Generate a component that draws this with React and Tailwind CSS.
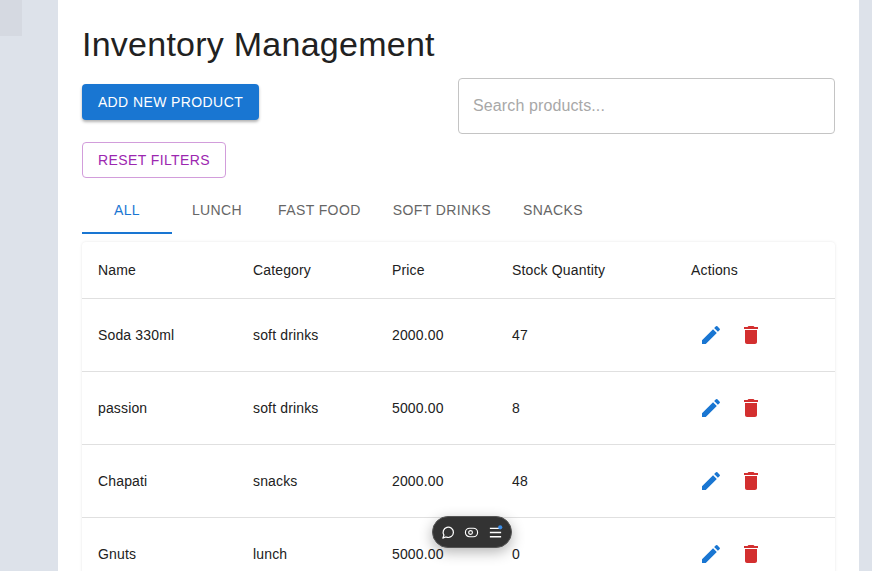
import React from 'react';

const products = [
  { name: 'Soda 330ml', category: 'soft drinks', price: '2000.00', stock: 47 },
  { name: 'passion', category: 'soft drinks', price: '5000.00', stock: 8 },
  { name: 'Chapati', category: 'snacks', price: '2000.00', stock: 48 },
  { name: 'Gnuts', category: 'lunch', price: '5000.00', stock: 0 },
];

const tabs = ['LUNCH', 'FAST FOOD', 'SOFT DRINKS', 'SNACKS'];

const EditIcon = () => (
  <svg viewBox="0 0 24 24" className="w-6 h-6 fill-[#1976d2]">
    <path d="M3 17.25V21h3.75L17.81 9.94l-3.75-3.75L3 17.25zM20.71 7.04c.39-.39.39-1.02 0-1.41l-2.34-2.34a.9959.9959 0 0 0-1.41 0l-1.83 1.83 3.75 3.75 1.83-1.83z" />
  </svg>
);

const DeleteIcon = () => (
  <svg viewBox="0 0 24 24" className="w-6 h-6 fill-[#d32f2f]">
    <path d="M6 19c0 1.1.9 2 2 2h8c1.1 0 2-.9 2-2V7H6v12zM19 4h-3.5l-1-1h-5l-1 1H5v2h14V4z" />
  </svg>
);

const App = () => {
  return (
    <div className="relative flex h-screen overflow-hidden bg-[#dde2ea] font-['Liberation_Sans',Arial,sans-serif]">
      <div className="w-[22px] h-9 shrink-0 bg-[#d5d9e1]"></div>
      <div className="ml-9 w-[801px] shrink-0 bg-white px-6 pt-[23px]">
        <h1 className="text-[34px] leading-[42px] tracking-[0.25px] text-[#212121]">
          Inventory Management
        </h1>
        <div className="flex justify-between items-start mt-[13px]">
          <div className="flex flex-col items-start gap-[22px] pt-[6px]">
            <button className="h-9 w-[177px] rounded bg-[#1976d2] text-sm tracking-[0.4px] text-white font-medium shadow-[0_2px_3px_rgba(0,0,0,0.3)]">
              ADD NEW PRODUCT
            </button>
            <button className="h-9 w-36 rounded border border-[#d29ddb] text-sm tracking-[0.4px] text-[#9c27b0]">
              RESET FILTERS
            </button>
          </div>
          <input
            placeholder="Search products..."
            className="w-[377px] h-14 rounded border border-[#c4c4c4] px-[14px] text-base tracking-[0.12px] text-[#212121] placeholder:text-[#a8a8a8] outline-none"
          />
        </div>
        <div className="flex h-12 mt-2 text-sm tracking-[0.4px] text-[#666666]">
          <div className="w-[90px] pt-[2px] flex items-center justify-center border-b-2 border-[#1976d2] text-[#1976d2]">
            ALL
          </div>
          {tabs.map((tab) => (
            <div key={tab} className="min-w-[90px] px-4 flex items-center justify-center">
              {tab}
            </div>
          ))}
        </div>
        <div className="mt-2 rounded bg-white shadow-[0_0_3px_rgba(0,0,0,0.1)]">
          <table className="w-full table-fixed text-sm tracking-[0.15px] text-[#212121]">
            <colgroup>
              <col className="w-[155px]" />
              <col className="w-[139px]" />
              <col className="w-[120px]" />
              <col className="w-[179px]" />
              <col />
            </colgroup>
            <thead>
              <tr className="h-14 border-b border-[#e0e0e0] text-left">
                <th className="px-4 font-normal">Name</th>
                <th className="px-4 font-normal">Category</th>
                <th className="px-4 font-normal">Price</th>
                <th className="px-4 font-normal">Stock Quantity</th>
                <th className="px-4 font-normal">Actions</th>
              </tr>
            </thead>
            <tbody>
              {products.map((p) => (
                <tr key={p.name} className="h-[73px] border-b border-[#e0e0e0]">
                  <td className="px-4">{p.name}</td>
                  <td className="px-4">{p.category}</td>
                  <td className="px-4">{p.price}</td>
                  <td className="px-4">{p.stock}</td>
                  <td className="px-4">
                    <div className="flex">
                      <button className="p-2"><EditIcon /></button>
                      <button className="p-2"><DeleteIcon /></button>
                    </div>
                  </td>
                </tr>
              ))}
            </tbody>
          </table>
        </div>
      </div>
      <div className="absolute left-[432px] top-[516px] w-20 h-8 pr-[2px] rounded-full bg-[#333333] border border-[#555555] shadow-[0_4px_14px_rgba(0,0,0,0.3)] flex items-center justify-center gap-[9px]">
        <svg viewBox="0 0 16 16" className="w-[15px] h-[15px] fill-none stroke-white stroke-[1.3]">
          <path d="M3 14l1.2-3.2A5.5 5.5 0 1 1 7 13a6 6 0 0 1-1.2-.2z" strokeLinejoin="round" />
        </svg>
        <svg viewBox="0 0 16 16" className="w-[15px] h-[15px] fill-none stroke-white stroke-[1.2]">
          <rect x="1.5" y="3.5" width="13" height="9" rx="4.5" />
          <circle cx="7" cy="8" r="2" />
        </svg>
        <svg viewBox="0 0 16 16" className="w-[15px] h-[15px] overflow-visible">
          <path d="M2 3.5h12M2 8h12M2 12.5h12" className="stroke-white stroke-[1.4]" />
          <circle cx="13" cy="2.5" r="2.2" className="fill-[#3b8eea]" />
        </svg>
      </div>
    </div>
  );
};

export default App;
